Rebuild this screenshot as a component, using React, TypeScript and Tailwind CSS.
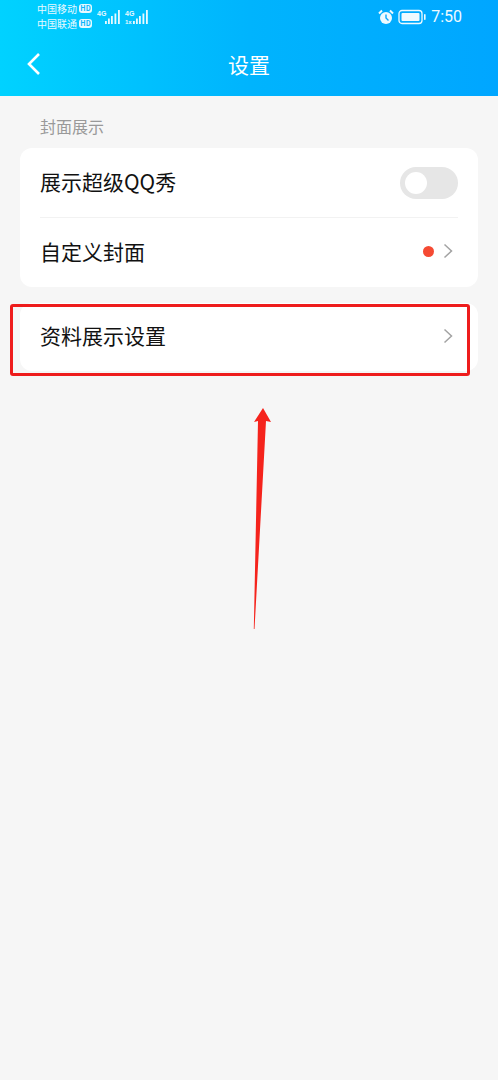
const font = { fontFamily: '"Noto Sans CJK SC", "Liberation Sans", sans-serif' };

function HdBadge() {
  return (
    <span className="ml-[2px] flex h-[9px] w-[13px] items-center justify-center rounded-[3px] bg-white/90 text-[7px] font-bold leading-none text-[#0bb4fb]">
      HD
    </span>
  );
}

function Signal({ extra }: { extra?: boolean }) {
  return (
    <svg width="24" height="18" viewBox="0 0 24 18" fill="none" className="block">
      <text x="0" y="7" fontSize="7" fontWeight="700" fill="#e8f9ff" fontFamily="Liberation Sans">4G</text>
      {extra && <text x="0" y="15" fontSize="6" fontWeight="700" fill="#e8f9ff" fontFamily="Liberation Sans">1x</text>}
      <g fill="#e8f9ff">
        <rect x="8" y="12" width="1.8" height="3" />
        <rect x="11" y="9.5" width="1.8" height="5.5" />
        <rect x="14" y="7" width="1.8" height="8" />
        <rect x="17.5" y="4.5" width="1.8" height="10.5" />
        <rect x="21" y="1" width="1.8" height="14" />
      </g>
    </svg>
  );
}

function Chevron() {
  return (
    <svg width="10" height="16" viewBox="0 0 10 16" fill="none" className="block">
      <path d="M1.5 1.5 L8.5 8 L1.5 14.5" stroke="#a3a3a3" strokeWidth="1.5" />
    </svg>
  );
}

export default function App() {
  return (
    <div className="relative h-[1080px] w-[498px] overflow-hidden bg-[#f6f6f6]" style={font}>
      <header className="h-[96px] bg-gradient-to-r from-[#00d2ff] via-[#00b4fd] to-[#00a6ff] text-white">
        <div className="flex h-[32px] items-start justify-between pl-[37px] pr-[36px] pt-[1px]">
          <div className="flex items-start">
            <div className="flex flex-col text-[10px] leading-[15px] text-[#e8f9ff]">
              <div className="flex items-center">中国移动<HdBadge /></div>
              <div className="flex items-center">中国联通<HdBadge /></div>
            </div>
            <div className="ml-[5px] mt-[8px] flex gap-[4px]">
              <Signal />
              <Signal extra />
            </div>
          </div>
          <div className="flex items-center pt-[8px]">
            <svg width="16" height="16" viewBox="0 0 16 16" className="block" fill="none">
              <circle cx="8" cy="9" r="6" fill="#eefaff" />
              <path d="M8 5.5 V9 L10.5 11.5" stroke="#0aa5fd" strokeWidth="1.4" />
              <path d="M1 4.5 L4 1.5 M15 4.5 L12 1.5" stroke="#eefaff" strokeWidth="2" />
            </svg>
            <svg width="29" height="16" viewBox="0 0 29 16" className="ml-[4px] block" fill="none">
              <rect x="1" y="1.5" width="23" height="13" rx="3" stroke="#eefaff" strokeWidth="1.3" />
              <rect x="3.5" y="4" width="18" height="8" rx="1" fill="#eefaff" />
              <rect x="26" y="5" width="1.6" height="6" rx="0.8" fill="#eefaff" />
            </svg>
            <span className="ml-[4px] text-[16px] leading-[16px] text-[#eefaff]" style={{ fontFamily: '"Roboto", sans-serif' }}>7:50</span>
          </div>
        </div>
        <div className="relative flex h-[64px] items-center justify-center">
          <svg width="16" height="24" viewBox="0 0 16 24" fill="none" className="absolute left-[26px] top-[20px] block">
            <path d="M13 2 L3 12 L13 22" stroke="white" strokeWidth="2.6" />
          </svg>
          <span className="text-[21px] leading-none">设置</span>
        </div>
      </header>

      <main className="px-[20px]">
        <div className="flex h-[52px] items-center pl-[20px] pt-[8px] text-[16px] leading-none text-[#999999]">封面展示</div>
        <section className="rounded-[12px] bg-white">
          <div className="mx-[20px] flex h-[70px] items-center justify-between border-b border-[#f2f2f2]">
            <span className="-mt-[2px] text-[21px] leading-none text-[#111111]">展示超级QQ秀</span>
            <span className="flex h-[32px] w-[58px] items-center rounded-full bg-[#e6e6e6] pl-[5px]">
              <span className="h-[22px] w-[22px] rounded-full bg-white" />
            </span>
          </div>
          <div className="mx-[20px] flex h-[69px] items-center justify-between">
            <span className="-mt-[3px] text-[21px] leading-none text-[#111111]">自定义封面</span>
            <span className="-mt-[3px] flex items-center gap-[9px] pr-[5px]">
              <span className="h-[11px] w-[11px] rounded-full bg-[#f54a33]" />
              <Chevron />
            </span>
          </div>
        </section>
        <section className="mt-[16px] flex h-[68px] items-center justify-between rounded-[12px] bg-white px-[20px]">
          <span className="-mt-[3px] text-[21px] leading-none text-[#111111]">资料展示设置</span>
          <span className="-mt-[3px] pr-[5px]"><Chevron /></span>
        </section>
      </main>

      {/* annotation drawn over the screenshot */}
      <div className="absolute left-[10px] top-[304px] h-[72px] w-[460px] rounded-[3px] border-[3px] border-[#ee1c1c]" />
      <svg width="40" height="240" viewBox="0 0 40 240" fill="none" className="absolute left-[240px] top-[400px] block">
        <path d="M23 8 L31 22 L26 21 L14.5 229 L13.8 229 L18 21 L14 22 Z" fill="#f5231c" />
      </svg>
    </div>
  );
}
